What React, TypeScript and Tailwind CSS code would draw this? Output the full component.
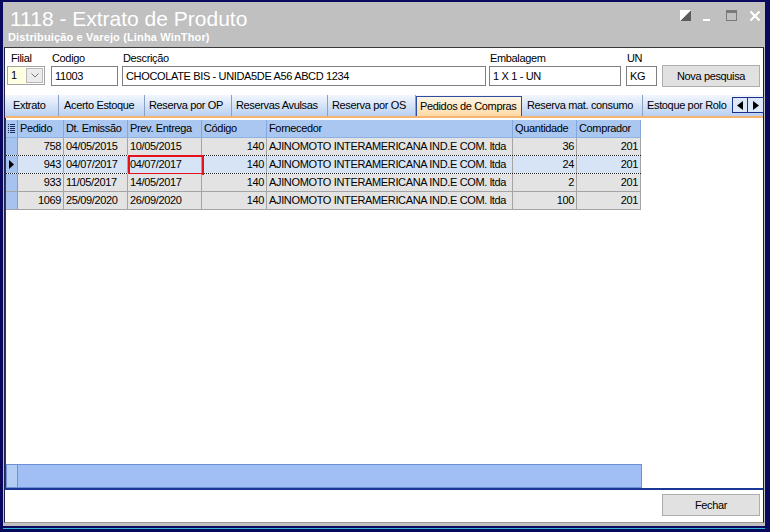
import React from "react";

// Extrato de Produto — WinThor style window (tab "Pedidos de Compras")
const rows = [
  { pedido: 758, emissao: "04/05/2015", entrega: "10/05/2015", qtd: 36, sel: false },
  { pedido: 943, emissao: "04/07/2017", entrega: "04/07/2017", qtd: 24, sel: true },
  { pedido: 933, emissao: "11/05/2017", entrega: "14/05/2017", qtd: 2, sel: false },
  { pedido: 1069, emissao: "25/09/2020", entrega: "26/09/2020", qtd: 100, sel: false },
];

const tabs = [
  { label: "Extrato", cls: "w-[54px] pl-[8px]" },
  { label: "Acerto Estoque", cls: "w-[86px] pl-[5px]" },
  { label: "Reserva por OP", cls: "w-[87px] pl-[4px]" },
  { label: "Reservas Avulsas", cls: "w-[96px] pl-[4px]" },
  { label: "Reserva por OS", cls: "w-[88px] pl-[4px]" },
  { label: "Pedidos de Compras", cls: "w-[106px] pl-[3px]", active: true },
  { label: "Reserva mat. consumo", cls: "w-[121px] pl-[5px]" },
  { label: "Estoque por Rolo", cls: "w-[89px] pl-[4px]", clip: true },
];

const headers = [
  { label: "Pedido", w: "w-[46px]" },
  { label: "Dt. Emissão", w: "w-[64px]" },
  { label: "Prev. Entrega", w: "w-[74px]" },
  { label: "Código", w: "w-[65px]" },
  { label: "Fornecedor", w: "w-[246px]" },
  { label: "Quantidade", w: "w-[64px]" },
  { label: "Comprador", w: "w-[64px]" },
];

function Field({
  label,
  value,
  w,
  ml,
}: {
  label: string;
  value: string;
  w: string;
  ml: string;
}) {
  return (
    <div className={`flex flex-col ${ml}`}>
      <span className="h-[13px] pl-[1px] text-[11px] leading-[13px] text-black">{label}</span>
      <div
        className={`mt-[1px] flex h-[20px] items-center border border-[#7f7f7f] bg-white pl-[3px] text-[11px] text-black ${w}`}
      >
        {value}
      </div>
    </div>
  );
}

function Cell({
  w,
  right,
  sel,
  children,
}: {
  w: string;
  right?: boolean;
  sel?: boolean;
  children?: React.ReactNode;
}) {
  return (
    <div
      className={`h-full shrink-0 overflow-hidden whitespace-nowrap border-r border-[#a4a4a4] leading-[17px] ${w} ${
        right ? "pr-[2px] text-right" : "pl-[2px]"
      } ${sel ? "bg-[#d6e4f5]" : "bg-[#e3e3e3]"}`}
    >
      {children}
    </div>
  );
}

function Button({ label }: { label: string }) {
  return (
    <div className="flex h-[22px] w-[98px] items-center justify-center border border-[#adadad] bg-[#e1e1e1] text-[11px] text-black">
      {label}
    </div>
  );
}

export default function App() {
  return (
    <div className="h-[532px] w-[770px] overflow-hidden bg-[#08085e] pl-[3px] pr-[5px] pt-[2px] font-['Liberation_Sans',Arial,sans-serif] tracking-[-0.35px]">
      <div className="flex h-[524px] flex-col bg-[#c0c0c0]">
        {/* title bar */}
        <div className="flex h-[45px] shrink-0">
          <div className="flex flex-1 flex-col">
            <div className="mt-[5px] pl-[7px] text-[21px] leading-[24px] tracking-normal text-white">
              1118 - Extrato de Produto
            </div>
            <div className="pl-[5px] text-[11px] font-bold leading-[13px] tracking-[0.15px] text-white">
              Distribuição e Varejo (Linha WinThor)
            </div>
          </div>
          <div className="flex items-start gap-[12px] pr-[4px] pt-[8px]">
            <svg width="11" height="11" viewBox="0 0 11 11">
              <rect x="0" y="0" width="11" height="11" fill="#ffffff" />
              <polygon points="11,0 11,11 0,11" fill="#5c5c5c" />
              <polygon points="0,0 11,0 0,11" fill="#ffffff" />
            </svg>
            <div className="mt-[9px] h-[2px] w-[7px] bg-white" />
            <div className="ml-[4px] h-[11px] w-[11px] border border-t-[3px] border-[#7a7a7a]" />
            <svg width="12" height="12" viewBox="0 0 12 12">
              <path d="M1.5 1.5 L10.5 10.5 M10.5 1.5 L1.5 10.5" stroke="#ffffff" strokeWidth="2.2" />
            </svg>
          </div>
        </div>

        {/* main panel */}
        <div className="mx-[1px] flex h-[476px] shrink-0 flex-col border border-b-[#9a9a9a] border-l-[#22224a] border-r-[#14145a] border-t-[#3a3a3a] bg-white">
          {/* fields */}
          <div className="flex h-[47px] shrink-0 items-start pl-[2px] pt-[4px]">
            <div className="flex flex-col">
              <span className="h-[13px] pl-[4px] text-[11px] leading-[13px] text-black">Filial</span>
              <div className="mt-[1px] flex h-[19px] w-[38px] border border-[#a3a3a3]">
                <div className="flex flex-1 items-center bg-[#ffffe1] pl-[3px] text-[11px] text-black">1</div>
                <div className="m-[1px] flex w-[17px] items-center justify-center border border-[#b8b8b8] bg-[#ececec]">
                  <svg width="8" height="5" viewBox="0 0 8 5">
                    <path d="M0.5 0.5 L4 4 L7.5 0.5" fill="none" stroke="#7a7a7a" strokeWidth="1" />
                  </svg>
                </div>
              </div>
            </div>
            <Field label="Codigo" value="11003" w="w-[67px]" ml="ml-[6px]" />
            <Field
              label="Descrição"
              value="CHOCOLATE BIS - UNIDA5DE A56 ABCD 1234"
              w="w-[364px]"
              ml="ml-[4px]"
            />
            <Field label="Embalagem" value="1 X 1 - UN" w="w-[132px]" ml="ml-[3px]" />
            <Field label="UN" value="KG" w="w-[31px]" ml="ml-[5px]" />
            <div className="ml-[5px] mt-[13px]">
              <Button label="Nova pesquisa" />
            </div>
          </div>

          {/* tab strip */}
          <div className="flex h-[23px] shrink-0 items-end border-b-2 border-[#f6b472] bg-gradient-to-b from-[#f3f7fd] to-[#b9d0f1]">
            {tabs.map((t) =>
              t.active ? (
                <div
                  key={t.label}
                  className={`flex h-[20px] shrink-0 items-center whitespace-nowrap border border-b-0 border-[#2d4f9e] bg-gradient-to-b from-[#fff6e6] to-[#fcd9a4] text-[11px] text-black ${t.cls}`}
                >
                  {t.label}
                </div>
              ) : (
                <div
                  key={t.label}
                  className={`flex h-[21px] shrink-0 items-center overflow-hidden whitespace-nowrap text-[11px] text-black ${t.cls} ${
                    t.clip ? "" : "border-r border-[#8aa0c4]"
                  }`}
                >
                  <span className="pb-[1px]">{t.label}</span>
                </div>
              )
            )}
            <div className="mb-[3px] flex">
              <div className="flex h-[16px] w-[16px] items-center justify-center border border-[#1c2f8c] bg-[#dde8f8]">
                <svg width="6" height="9" viewBox="0 0 6 9">
                  <polygon points="6,0 6,9 0,4.5" fill="#000" />
                </svg>
              </div>
              <div className="flex h-[16px] w-[16px] items-center justify-center border border-l-0 border-[#1c2f8c] bg-[#dde8f8]">
                <svg width="6" height="9" viewBox="0 0 6 9">
                  <polygon points="0,0 0,9 6,4.5" fill="#000" />
                </svg>
              </div>
            </div>
          </div>

          {/* tab sheet with grid */}
          <div className="flex h-[372px] shrink-0 flex-col border-b-2 border-l border-[#1a3796] pt-[2px]">
            <div className="flex w-[635px] flex-col text-[11px] text-black">
              {/* header */}
              <div className="flex h-[18px] border-b border-[#8fb0e2] bg-[#aac7f1]">
                <div className="flex w-[12px] shrink-0 items-center justify-center border-r border-[#7c9fd6]">
                  <svg width="7" height="9" viewBox="0 0 7 9">
                    <rect x="0" y="0" width="1" height="1" fill="#1a2a5a" />
                    <rect x="2" y="0" width="5" height="1" fill="#1a2a5a" />
                    <rect x="0" y="2" width="1" height="1" fill="#1a2a5a" />
                    <rect x="2" y="2" width="5" height="1" fill="#1a2a5a" />
                    <rect x="0" y="4" width="1" height="1" fill="#1a2a5a" />
                    <rect x="2" y="4" width="5" height="1" fill="#1a2a5a" />
                    <rect x="0" y="6" width="1" height="1" fill="#1a2a5a" />
                    <rect x="2" y="6" width="5" height="1" fill="#1a2a5a" />
                    <rect x="0" y="8" width="1" height="1" fill="#1a2a5a" />
                    <rect x="2" y="8" width="5" height="1" fill="#1a2a5a" />
                  </svg>
                </div>
                {headers.map((h) => (
                  <div
                    key={h.label}
                    className={`shrink-0 overflow-hidden whitespace-nowrap border-r border-[#84a7dc] pl-[2px] leading-[17px] ${h.w}`}
                  >
                    {h.label}
                  </div>
                ))}
              </div>

              {/* rows */}
              {rows.map((r, i) => {
                const dotted = r.sel || rows[i + 1]?.sel;
                return (
                  <div
                    key={r.pedido}
                    className={`flex h-[18px] border-b ${
                      dotted ? "border-dotted border-[#202020]" : "border-[#a4a4a4]"
                    }`}
                  >
                    <div className="flex w-[12px] shrink-0 items-center justify-center border-r border-[#7c9fd6] bg-[#a6c3ef]">
                      {r.sel && (
                        <svg width="5" height="9" viewBox="0 0 5 9">
                          <polygon points="0,0 0,9 5,4.5" fill="#000" />
                        </svg>
                      )}
                    </div>
                    <Cell w="w-[46px]" right sel={r.sel}>
                      {r.pedido}
                    </Cell>
                    <Cell w="w-[64px]" sel={r.sel}>
                      {r.emissao}
                    </Cell>
                    <div className="relative">
                      <Cell w="w-[74px]" sel={r.sel}>
                        {r.entrega}
                      </Cell>
                      {r.sel && (
                        <div className="absolute left-0 top-[-1px] h-[20px] w-[76px] border-2 border-[#e5121b]" />
                      )}
                    </div>
                    <Cell w="w-[65px]" right sel={r.sel}>
                      140
                    </Cell>
                    <Cell w="w-[246px]" sel={r.sel}>
                      AJINOMOTO INTERAMERICANA IND.E COM. ltda
                    </Cell>
                    <Cell w="w-[64px]" right sel={r.sel}>
                      {r.qtd}
                    </Cell>
                    <Cell w="w-[64px]" right sel={r.sel}>
                      201
                    </Cell>
                  </div>
                );
              })}
            </div>

            <div className="flex-1" />

            {/* footer summary bar */}
            <div className="flex h-[24px] w-[636px] border border-[#6d8fd5] bg-[#a1bff4]">
              <div className="w-[11px] border-r border-[#6d8fd5] bg-[#b3cdf3]" />
            </div>
          </div>

          {/* bottom buttons */}
          <div className="flex flex-1 items-start justify-end pr-[3px] pt-[4px]">
            <Button label="Fechar" />
          </div>
        </div>

        <div className="flex-1" />
      </div>
      <div className="mt-[2px] h-[1px] w-full bg-[#36b7d6]" />
    </div>
  );
}
